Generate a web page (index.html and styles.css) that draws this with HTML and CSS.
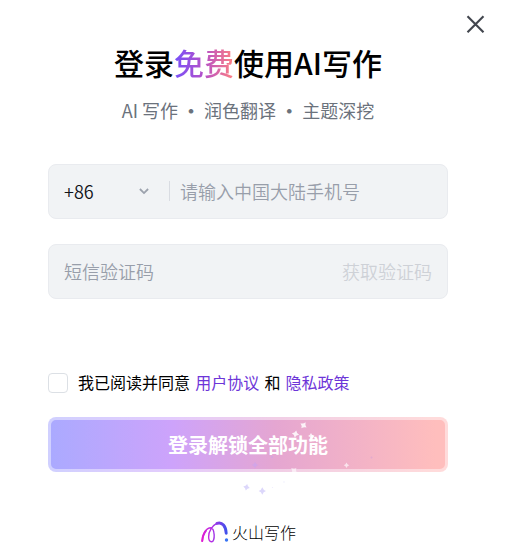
FILE: index.html
```html
<!DOCTYPE html>
<html lang="zh-CN">
<head>
<meta charset="utf-8">
<title>火山写作</title>
<link rel="stylesheet" href="styles.css">
</head>
<body>
<main class="dialog">
  <button class="close" aria-label="关闭">
    <svg width="19" height="18" viewBox="0 0 19 18"><path d="M1.5 1.3 17.5 17.3M17.5 1.3 1.5 17.3" fill="none" stroke="#42464e" stroke-width="2.1"/></svg>
  </button>
  <h1 class="title">登录<span class="accent">免费</span>使用AI写作</h1>
  <p class="subtitle">AI 写作 <span class="dot">·</span> 润色翻译 <span class="dot">·</span> 主题深挖</p>
  <div class="field phone">
    <span class="code">+86</span>
    <svg class="chevron" width="10" height="7" viewBox="0 0 10 7"><path d="M.9 1 5 5.1 9.1 1" fill="none" stroke="#9ca2ad" stroke-width="1.8"/></svg>
    <span class="divider"></span>
    <span class="placeholder">请输入中国大陆手机号</span>
  </div>
  <div class="field sms">
    <span class="placeholder">短信验证码</span>
    <span class="send">获取验证码</span>
  </div>
  <div class="terms">
    <span class="checkbox"></span>
    <span class="agree">我已阅读并同意</span>
    <a>用户协议</a>
    <span>和</span>
    <a>隐私政策</a>
  </div>
  <div class="action">
    <button class="submit">登录解锁全部功能</button>
    <svg class="sparkles" width="180" height="90" viewBox="230 415 180 90">
      <defs><path id="star" d="M0-3.7Q.9-.9 3.7 0 .9.9 0 3.7-.9.9-3.7 0-.9-.9 0-3.7Z"/></defs>
      <g fill="#fff">
        <use href="#star" transform="translate(303.5 425.3) rotate(35)" opacity=".85"/>
        <use href="#star" transform="translate(295.5 434) rotate(12)" opacity=".85"/>
        <use href="#star" transform="translate(311 436) scale(.8)" opacity=".8"/>
        <use href="#star" transform="translate(294 470.5) rotate(40)" opacity=".6"/>
        <use href="#star" transform="translate(346.5 465.3) scale(.75)" opacity=".65"/>
      </g>
      <g fill="#dcd7fb">
        <use href="#star" transform="translate(246.5 487.3) rotate(12) scale(.9)"/>
        <use href="#star" transform="translate(262.3 491)"/>
        <use href="#star" transform="translate(255 465) scale(.85)" fill="#cba5ee" opacity=".65"/>
        <circle cx="272.5" cy="487.5" r=".6" opacity=".5"/>
        <circle cx="284" cy="482" r=".7" opacity=".5"/>
        <circle cx="371.5" cy="457.5" r="1" fill="#dba5d2" opacity=".7"/>
        <circle cx="272" cy="457" r="1" fill="#c7a3e8" opacity=".6"/>
      </g>
    </svg>
  </div>
  <footer class="brand">
    <svg width="30" height="24" viewBox="200 520 30 24">
      <defs><linearGradient id="ink" x1="201" y1="535" x2="228" y2="535" gradientUnits="userSpaceOnUse"><stop stop-color="#e51bd0"/><stop offset=".4" stop-color="#b42fe5"/><stop offset="1" stop-color="#3354ec"/></linearGradient></defs>
      <g fill="none" stroke="url(#ink)" stroke-linecap="round">
        <path d="M202.3 541C202.7 535 205.4 528.3 210.3 527.8 215 527.8 215.5 542 211.5 541.8 207.7 541.5 207.8 533.8 211 528.9 214.2 523.6 218.5 521.9 221.6 523.8" stroke-width="1.4"/>
        <path d="M202.2 541C202.5 537 203.8 533.2 205.8 530.8" stroke-width="2.1"/>
        <path d="M217 523.4C222.3 521.4 225.9 526.5 226.2 533.3" stroke-width="2.9"/>
      </g>
      <circle cx="226.5" cy="540" r="1.7" fill="#3975f4"/>
    </svg>
    <span class="brand-name">火山写作</span>
  </footer>
</main>
</body>
</html>
```
FILE: styles.css
```css
* { box-sizing: border-box; }
body { margin: 0; background: #fff; color: #000; font-family: "Noto Sans CJK SC", sans-serif; }
button { font-family: inherit; padding: 0; border: 0; }
.dialog { width: 518px; height: 556px; padding: 40px 70px 0 48px; position: relative; overflow: hidden; }
.close { position: absolute; top: 15px; right: 33px; width: 19px; height: 18px; background: none; }
.close svg { display: block; }
.title { margin: 0; height: 44px; line-height: 44px; font-size: 30px; font-weight: 500; text-align: center; white-space: nowrap; }
.accent { color: transparent; background: linear-gradient(90deg, #7650fa 0%, #b650c8 50%, #ff8080 100%); background-clip: text; -webkit-background-clip: text; }
.subtitle { margin: 13px 0 41px; height: 26px; line-height: 26px; font-size: 18px; font-weight: 400; color: #6b727c; text-align: center; white-space: nowrap; }
.dot { display: inline-block; font-weight: 700; }
.field { display: flex; align-items: center; height: 55px; padding: 0 15px 2px; border: 1px solid #e9ebef; border-radius: 8px; background: #f1f3f5; font-size: 18px; font-weight: 350; line-height: 26px; }
.sms { margin-top: 25px; justify-content: space-between; }
.code { width: 75px; color: #111419; }
.chevron { display: block; margin-top: 2px; }
.divider { width: 1px; height: 20px; margin: 1px 10px 0 20px; background: #d9dce2; }
.placeholder { color: #989eaa; }
.send { color: #ced1d7; }
.terms { display: flex; align-items: center; height: 24px; margin-top: 72px; font-size: 16px; line-height: 22px; padding-bottom: 2px; white-space: nowrap; }
.terms > * + * { margin-left: 5.2px; }
.terms .checkbox { width: 20px; height: 20px; margin-top: 2px; border: 1px solid #dce0e5; border-radius: 4px; background: #fff; }
.terms .agree { margin-left: 10px; }
.terms a { color: #6d35d8; }
.action { position: relative; margin-top: 22px; }
.submit { display: block; width: 400px; height: 55px; padding-bottom: 1px; border: 3px solid rgba(255,255,255,.45); border-radius: 8px; color: #fff; font-size: 20px; font-weight: 700; background: linear-gradient(90deg, #aaaaff 0%, #cda3fb 31%, #e5a6d1 57%, #ffbebd 97%) border-box; }
.sparkles { position: absolute; left: 182px; top: -2px; pointer-events: none; }
.brand { display: flex; align-items: center; height: 24px; margin-top: 48px; padding-left: 152px; }
.brand-name { margin-left: 2px; font-size: 16px; font-weight: 300; line-height: 24px; color: #000; }
```
